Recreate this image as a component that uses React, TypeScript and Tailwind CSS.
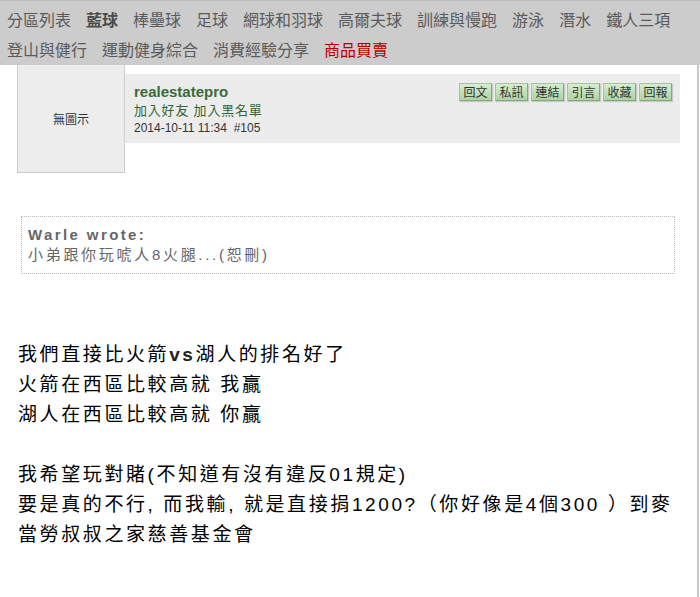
import React from 'react';

const cjk = "font-['Noto_Sans_CJK_TC','Noto_Sans',sans-serif]";
const arial = "font-['Liberation_Sans','Noto_Sans_CJK_TC',sans-serif]";

const navItems: { label: string; bold?: boolean; red?: boolean }[] = [
  { label: '分區列表' },
  { label: '藍球', bold: true },
  { label: '棒壘球' },
  { label: '足球' },
  { label: '網球和羽球' },
  { label: '高爾夫球' },
  { label: '訓練與慢跑' },
  { label: '游泳' },
  { label: '潛水' },
  { label: '鐵人三項' },
  { label: '登山與健行' },
  { label: '運動健身綜合' },
  { label: '消費經驗分享' },
  { label: '商品買賣', red: true },
];

const actions = ['回文', '私訊', '連結', '引言', '收藏', '回報'];

export default function App() {
  return (
    <div className="w-[700px] h-[597px] bg-white overflow-hidden">
      {/* 分區選單 */}
      <nav
        className={`flex flex-wrap bg-[#cccccc] border-t border-[#bdbdbd] pl-[7px] pt-[3px] pb-[1px] text-[16px] leading-[30px] text-[#5a5a5a] ${cjk}`}
      >
        {navItems.map((item) => (
          <span
            key={item.label}
            className={`mr-[15px] whitespace-nowrap ${item.bold ? 'font-bold text-[#4a4a4a]' : ''} ${
              item.red ? 'text-[#b30000]' : ''
            }`}
          >
            {item.label}
          </span>
        ))}
      </nav>

      <div className="border-r-2 border-[#c9c9c9] h-[532px] mr-[1px]">
        {/* 發文者資訊 */}
        <div className="flex pl-[17px] pr-[17px]">
          <div
            className={`w-[108px] h-[108px] shrink-0 bg-[#ededed] border border-t-0 border-[#cccccc] flex items-center justify-center text-[12px] text-[#333] ${cjk}`}
          >
            無圖示
          </div>
          <div className="flex-1 mt-[9px] h-[69px] bg-[#ececec] flex justify-between items-start pl-[9px] pr-[8px] pt-[9px]">
            <div>
              <div className={`text-[15px] leading-[18px] font-bold text-[#3b6b3b] ${arial}`}>
                realestatepro
              </div>
              <div className={`text-[13px] leading-[17px] mt-[1px] tracking-[0.8px] text-[#336633] ${arial}`}>
                加入好友 加入黑名單
              </div>
              <div className={`text-[12px] leading-[15px] mt-[2px] text-[#333] ${arial}`}>
                2014-10-11 11:34&nbsp;&nbsp;#105
              </div>
            </div>
            <div className="flex gap-[3px]">
              {actions.map((a) => (
                <button
                  key={a}
                  className={`w-[33px] h-[18px] text-[12px] leading-[16px] text-[#333] border border-[#a3c69c] border-b-[#86a880] border-r-[#86a880] bg-gradient-to-b from-[#d6edd0] to-[#acd4a3] shadow-[1px_1px_1px_rgba(0,0,0,0.15)] ${cjk}`}
                >
                  {a}
                </button>
              ))}
            </div>
          </div>
        </div>

        {/* 引言 */}
        <div className="ml-[21px] mr-[22px] mt-[43px] h-[58px] border border-dotted border-[#bbbbbb] pl-[6px] pt-[8px]">
          <div className={`text-[15px] leading-[19px] font-bold tracking-[2.4px] text-[#666] ${arial}`}>
            Warle wrote:
          </div>
          <div className={`text-[15px] leading-[22px] tracking-[2.7px] text-[#666] ${arial}`}>
            小弟跟你玩唬人8火腿...(恕刪)
          </div>
        </div>

        {/* 內文 */}
        <div className={`ml-[18px] mt-[66px] text-[19px] leading-[30px] tracking-[2.6px] text-black ${arial}`}>
          <div>
            我們直接比火箭<span className="font-bold text-[#222]">vs</span>湖人的排名好了
          </div>
          <div>火箭在西區比較高就 我贏</div>
          <div>湖人在西區比較高就 你贏</div>
          <div>&nbsp;</div>
          <div>我希望玩對賭(不知道有沒有違反01規定)</div>
          <div>要是真的不行, 而我輸, 就是直接捐1200?（你好像是4個300 ）到麥</div>
          <div>當勞叔叔之家慈善基金會</div>
        </div>
      </div>
    </div>
  );
}
